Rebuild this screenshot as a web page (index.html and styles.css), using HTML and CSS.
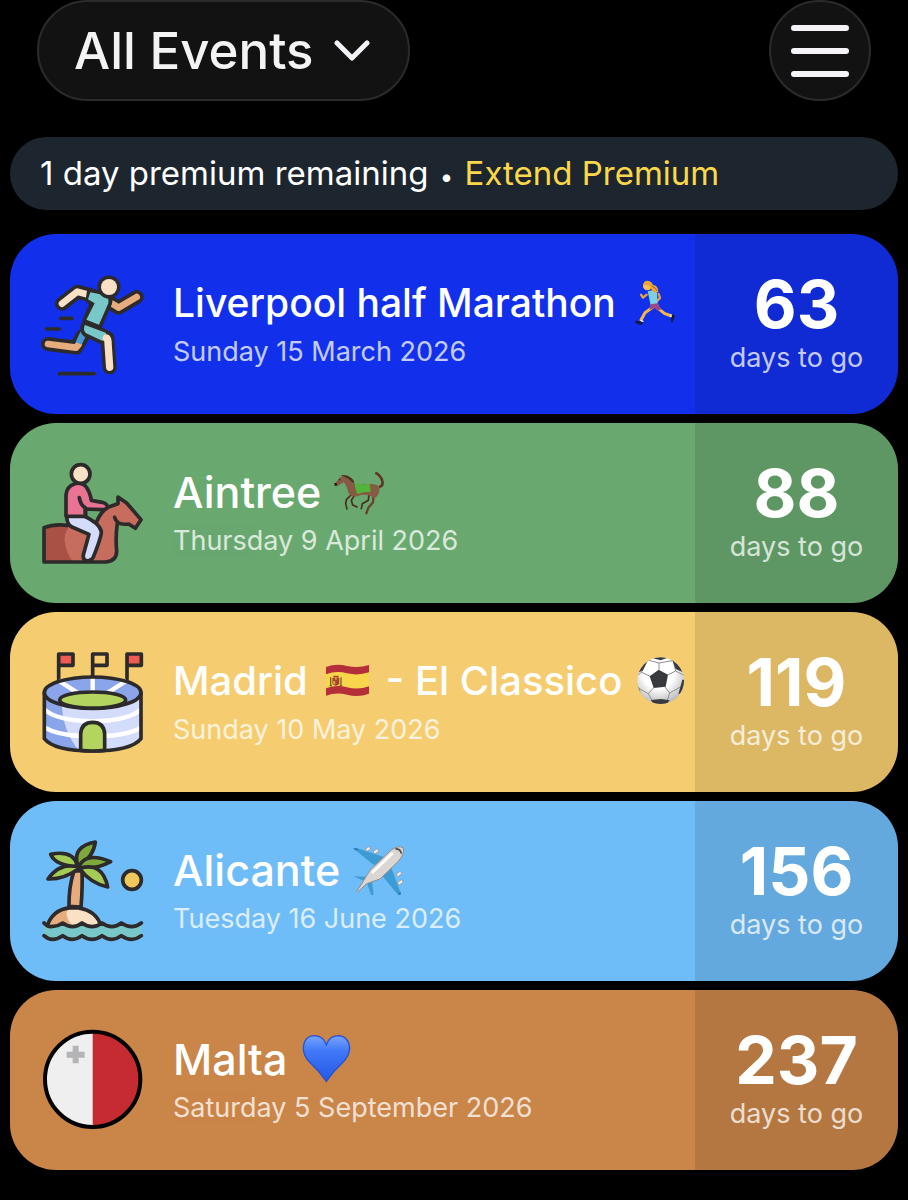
FILE: index.html
```html
<!DOCTYPE html>
<html lang="en">
<head>
    <meta charset="UTF-8">
    <meta name="viewport" content="width=device-width, initial-scale=1.0">
    <title>All Events</title>
    <link rel="stylesheet" href="styles.css">
</head>
<body>
    <header class="topbar">
        <button type="button" class="filter" aria-haspopup="true">
            All Events
            <svg class="chevron" viewBox="0 0 36 24" aria-hidden="true"><path d="M3 4 L18 19 L33 4"/></svg>
        </button>
        <button type="button" class="menu" aria-label="Menu">
            <svg viewBox="0 0 58 54" aria-hidden="true"><path d="M3 4H55M3 27H55M3 50H55"/></svg>
        </button>
    </header>

    <main>
        <p class="banner">1 day premium remaining <span class="dot">•</span> <a href="#">Extend Premium</a></p>

        <ul class="events">
            <li class="event blue">
                <!-- Runner -->
                <svg class="icon" viewBox="30 30 312 312" aria-hidden="true">
                    <g class="line">
                        <path d="M92 169H126M50 201H88M88 335H192"/>
                    </g>
                    <g class="limb-edge">
                        <path d="M320 105L266 137L248 126"/>
                        <path d="M158 222L138 257L54 246"/>
                        <path d="M96 125L142 89L184 100"/>
                        <path d="M176 200L232 228L239 316"/>
                    </g>
                    <g class="limb">
                        <path stroke="#e6ac7d" d="M320 105L266 137L248 126"/>
                        <path stroke="#e6ac7d" d="M146 247L138 257L54 246"/>
                        <path stroke="#4b99cf" stroke-linecap="butt" d="M162 210L146 244"/>
                        <path stroke="#fae0c5" d="M96 125L142 89L176 98"/>
                    </g>
                    <path fill="#2d2a2b" stroke="#2d2a2b" stroke-width="22" stroke-linejoin="round" d="M181 93L218 98Q240 104 235 124L207 188L169 175L190 124L178 114Z"/>
                    <path fill="#79c8c9" d="M181 91L218 98Q240 104 235 124L207 188L169 173L194 124L174 112Z"/>
                    <path class="line" d="M165 182L224 206"/>
                    <path fill="#79c8c9" d="M163 188L229 213L217 238L164 216Q153 206 163 188Z"/>
                    <path stroke="#fae0c5" stroke-width="22" stroke-linecap="round" stroke-linejoin="round" fill="none" d="M229 228Q234 230 234 242L239 316"/>
                    <path class="line" d="M160 186Q150 206 166 219L214 241"/>
                    <circle class="line" cx="237" cy="75" r="29"/>
                    <circle fill="#fae0c5" cx="237" cy="75" r="24"/>
                </svg>
                <div class="details">
                    <h2 class="longest">Liverpool half Marathon
                        <svg class="emoji" viewBox="27 24 162 150" aria-label="runner" role="img">
                            <path fill="none" stroke="#e9a33b" stroke-width="7" stroke-linecap="round" stroke-linejoin="round" d="M83 74L72 83L66 74M119 72L123 84L114 94"/>
                            <path fill="none" stroke="#f2b64c" stroke-width="9" stroke-linecap="round" stroke-linejoin="round" d="M101 112L78 128L66 150M114 112L136 130L157 138"/>
                            <path fill="#7bd0e2" d="M86 64Q100 58 114 68L116 104L95 106Z"/>
                            <path fill="#9b4b83" d="M94 103L117 100L127 118L116 122L106 114L92 120Z"/>
                            <circle fill="#f8c252" cx="85" cy="48" r="13"/>
                            <path fill="#eda634" d="M73 46Q72 32 86 32Q98 33 102 45Q118 46 118 66Q104 72 96 56Q90 42 73 46Z"/>
                            <path fill="none" stroke="#a96b35" stroke-width="3" d="M97 48Q110 51 115 63"/>
                            <path fill="#101c45" d="M48 152L70 154L72 162L64 164L49 159ZM155 136L164 133L168 140L160 158L156 155Z"/>
                            <path fill="none" stroke="#fff" stroke-width="4" d="M65 151L73 155M155 133L157 141"/>
                        </svg>
                    </h2>
                    <p>Sunday 15 March 2026</p>
                </div>
                <div class="countdown"><strong>63</strong><span>days to go</span></div>
            </li>

            <li class="event green">
                <!-- Horse rider -->
                <svg class="icon" viewBox="30 30 312 312" aria-hidden="true">
                    <path fill="#c66d5e" d="M42 230Q78 218 120 222L190 225L220 184Q236 166 262 162L264 138L290 158L333 206L316 232L295 220Q272 224 258 216Q254 240 260 270L260 304Q256 333 228 333H42Z"/>
                    <path fill="#aa5146" d="M42 230Q78 218 118 226Q98 250 106 282Q112 312 130 333H42Z"/>
                    <path class="line" d="M112 223Q72 218 42 230V333H228Q260 330 260 300Q256 260 262 216M198 216Q214 178 236 168L264 158L264 138L290 156L333 206L316 232L296 219Q260 224 254 199"/>
                    <path class="line" fill="#d4dcfb" d="M110 194H160Q210 218 214 242Q214 258 190 318Q182 334 166 328Q158 324 160 312L177 250L126 228Q110 220 110 194Z"/>
                    <path class="line" fill="#e87393" d="M108 196V132Q110 106 134 98Q158 92 170 110Q180 124 184 148L216 154Q232 158 232 168Q228 176 218 176L166 174L167 196Z"/>
                    <path class="line" d="M148 140Q152 164 166 170V194"/>
                    <circle class="line" fill="#fae0c5" cx="152" cy="69" r="28"/>
                </svg>
                <div class="details">
                    <h2>Aintree
                        <svg class="emoji" viewBox="42 24 162 150" aria-label="horse" role="img">
                            <path fill="none" stroke="#5d3524" stroke-width="8" stroke-linejoin="round" d="M180 84Q194 80 190 66Q186 50 169 41"/>
                            <path fill="none" stroke="#4a2a1c" stroke-width="5" stroke-linecap="round" stroke-linejoin="round" d="M96 108L82 122L80 134L84 150M106 110L97 124L101 138L114 144M150 106L148 124L130 134L127 149"/>
                            <path fill="none" stroke="#6b4130" stroke-width="7" stroke-linecap="round" stroke-linejoin="round" d="M164 104L162 130L148 146L142 163"/>
                            <path fill="#865b43" d="M47 74L62 56L72 50L90 62L106 74L144 76Q174 72 182 86Q182 108 166 118Q148 104 126 108Q100 120 88 102Q84 80 74 70L54 82Z"/>
                            <path fill="#51301f" d="M64 50Q82 44 96 56Q106 62 106 74Q96 68 88 60L72 52Z"/>
                            <path fill="#53b43c" d="M107 73Q132 78 152 75L155 98Q132 98 115 105Q108 90 107 73Z"/>
                            <circle fill="#20130c" cx="62" cy="62" r="2"/>
                            <path fill="#20130c" d="M46 72L53 72L54 80L47 80Z"/>
                        </svg>
                    </h2>
                    <p>Thursday 9 April 2026</p>
                </div>
                <div class="countdown"><strong>88</strong><span>days to go</span></div>
            </li>

            <li class="event yellow">
                <!-- Stadium -->
                <svg class="icon" viewBox="30 30 312 312" aria-hidden="true">
                    <path class="line" fill="#ee5b52" d="M86 118V42H129V76H86"/>
                    <path class="line" d="M188 112V42H231V76H188"/>
                    <path class="line" fill="#ee5b52" d="M291 118V42H334V76H291"/>
                    <path fill="#d4dcfb" d="M43 158V296Q72 333 188 333Q304 333 333 296V158Z"/>
                    <path fill="#8aa5ea" d="M43 158V296Q72 326 146 331Q100 274 96 200Z"/>
                    <path fill="none" stroke="#fff" stroke-width="13" d="M43 208Q80 242 188 244Q296 242 333 208M43 262Q80 284 152 288M224 288Q300 284 333 262"/>
                    <ellipse fill="#8aa5ea" cx="188" cy="158" rx="145" ry="47"/>
                    <path fill="none" stroke="#fff" stroke-width="13" d="M86 122L142 158M188 110V156M290 122L234 158"/>
                    <ellipse class="line" cx="188" cy="158" rx="145" ry="47"/>
                    <ellipse class="line" fill="#b3d45e" cx="188" cy="180" rx="99" ry="24"/>
                    <path class="line" d="M43 158V296Q72 333 188 333Q304 333 333 296V158"/>
                    <path class="line" fill="#b3d45e" d="M152 331V282Q154 247 188 247Q222 247 224 282V331Q188 335 152 331Z"/>
                </svg>
                <div class="details">
                    <h2 class="long">Madrid
                        <svg class="emoji" viewBox="27 21 162 150" aria-label="flag of Spain" role="img">
                            <path fill="#b52f3a" d="M45 54Q76 42 108 51Q142 59 174 48V134Q142 146 108 137Q76 128 45 140Z"/>
                            <path fill="#f7d64b" d="M45 76Q76 64 108 73Q142 81 174 70V112Q142 124 108 115Q76 106 45 118Z"/>
                            <path fill="#a8452f" d="M64 87H85V105Q75 115 64 105ZM67 80H83V86H67Z"/>
                            <path fill="#d9a12e" d="M72 84H77V92H72ZM66 97H73V106H66Z"/>
                            <path fill="none" stroke="#7b5a36" stroke-width="4" d="M59 85V111M90 85V111M56 110H63M86 110H93"/>
                        </svg>
                        - El Classico
                        <svg class="emoji" viewBox="975 21 162 150" aria-label="football" role="img">
                            <defs>
                                <radialGradient id="ball" cx="45%" cy="35%" r="65%">
                                    <stop offset="0.5" stop-color="#fff"/>
                                    <stop offset="1" stop-color="#b9babd"/>
                                </radialGradient>
                                <clipPath id="ball-clip"><circle cx="1055" cy="95" r="70"/></clipPath>
                            </defs>
                            <circle fill="url(#ball)" cx="1055" cy="95" r="70"/>
                            <g clip-path="url(#ball-clip)">
                                <path fill="none" stroke="#8f9094" stroke-width="3" d="M1050 62V42L1012 32M1050 42L1096 34M1024 82L998 70L984 80M998 70L1010 36M1034 116L1018 134L986 116M1018 134L1030 156M1068 114L1082 132L1118 112M1082 132L1074 156M1076 78L1100 66L1126 80M1100 66L1092 34"/>
                                <path fill="#393a3d" d="M1049 62L1077 77L1070 113L1034 117L1022 82ZM1032 28L1055 34L1076 26L1070 18H1040ZM994 42L1016 36L1002 64L986 72ZM1090 32L1112 46L1122 70L1100 60ZM980 98L992 122L998 142L980 130ZM1120 92L1130 92V126L1108 136ZM1026 153L1056 150L1082 154L1070 170H1036Z"/>
                            </g>
                        </svg>
                    </h2>
                    <p>Sunday 10 May 2026</p>
                </div>
                <div class="countdown"><strong>119</strong><span>days to go</span></div>
            </li>

            <li class="event sky">
                <!-- Palm island -->
                <svg class="icon" viewBox="30 30 312 312" aria-hidden="true">
                    <path fill="#79c8c9" d="M42 284Q54 296 70 292Q84 292 98 284Q128 300 156 284Q186 300 216 284Q246 300 274 284Q306 302 334 282V320Q306 342 274 322Q246 342 216 322Q186 342 156 322Q128 342 98 322Q66 342 42 320Z"/>
                    <path fill="#fae0c5" d="M54 286Q74 236 132 236Q190 238 210 284Q184 298 156 284Q128 298 98 284Q76 298 54 286Z"/>
                    <path fill="#e6ac7d" d="M54 286Q70 238 124 238Q94 246 126 291Q110 292 98 284Q76 298 54 286Z"/>
                    <path class="line" d="M54 284Q74 236 132 236Q190 238 210 282"/>
                    <path class="line" d="M42 282Q54 296 70 292Q84 292 98 282Q128 304 156 282Q186 304 216 282Q246 304 274 282Q306 304 334 282M42 320Q66 342 98 320Q128 342 156 320Q186 342 216 320Q246 342 274 320Q306 342 334 320"/>
                    <path class="line" fill="#e6ac7d" d="M132 126Q116 174 117 232L153 234Q158 176 156 126Z"/>
                    <path class="line" fill="#a3cb55" d="M145 112Q88 100 54 150Q100 152 145 120Z"/>
                    <path class="line" fill="#a3cb55" d="M142 108Q128 62 62 76Q76 110 142 112Z"/>
                    <path class="line" fill="#7fa83c" d="M142 104Q128 52 196 39Q190 84 148 110Z"/>
                    <path class="line" fill="#7fa83c" d="M148 110Q170 68 242 98Q198 122 150 116Z"/>
                    <path class="line" fill="#a3cb55" d="M150 118Q218 98 233 174Q180 162 150 120Z"/>
                    <circle class="line" fill="#f0c75a" cx="306" cy="153" r="28"/>
                </svg>
                <div class="details">
                    <h2>Alicante
                        <svg class="emoji" viewBox="42 30 162 150" aria-label="airplane" role="img">
                            <path fill="#3d9bd3" d="M46 40L58 40L138 66L120 92L104 88ZM134 124L160 98L189 176L182 182ZM46 124L96 126L84 140ZM86 142L102 138L107 180L100 182Z"/>
                            <path fill="#2b7eb4" d="M46 40L58 40L60 46L50 46ZM182 172L188 170L189 178L182 182Z"/>
                            <g fill="#f1eeec" stroke="#948b88" stroke-width="2">
                                <ellipse cx="90" cy="42" rx="8" ry="5" transform="rotate(-35 90 42)"/>
                                <ellipse cx="114" cy="49" rx="9" ry="5" transform="rotate(-35 114 49)"/>
                                <ellipse cx="183" cy="117" rx="9" ry="5" transform="rotate(-40 183 117)"/>
                                <ellipse cx="187" cy="142" rx="9" ry="5" transform="rotate(-40 187 142)"/>
                            </g>
                            <path fill="#dcd6d3" stroke="#948b88" stroke-width="3" d="M56 170L96 106L158 46Q180 30 195 38Q202 52 182 78L126 132L86 146L58 172Z"/>
                            <path fill="none" stroke="#fff" stroke-width="8" stroke-linecap="round" d="M104 112L162 56"/>
                            <path fill="none" stroke="#4c5157" stroke-width="5" d="M172 41Q188 42 190 56"/>
                        </svg>
                    </h2>
                    <p>Tuesday 16 June 2026</p>
                </div>
                <div class="countdown"><strong>156</strong><span>days to go</span></div>
            </li>

            <li class="event orange">
                <!-- Flag of Malta -->
                <svg class="icon" viewBox="30 30 312 312" aria-hidden="true">
                    <circle fill="#efeff0" cx="188" cy="184" r="142"/>
                    <path fill="#c62b31" d="M188 42A142 142 0 0 1 188 326Z"/>
                    <path fill="#b4b4b6" d="M128 83H146V101H164V119H146V136H128V119H110V101H128Z"/>
                    <circle fill="none" stroke="#000" stroke-width="12" cx="188" cy="184" r="143"/>
                </svg>
                <div class="details">
                    <h2>Malta
                        <svg class="emoji" viewBox="417 48 162 150" aria-label="blue heart" role="img">
                            <defs>
                                <linearGradient id="heart" x1="0" y1="0" x2="0" y2="1">
                                    <stop offset="0" stop-color="#76a4ff"/>
                                    <stop offset="0.35" stop-color="#3f77f7"/>
                                    <stop offset="1" stop-color="#2459e6"/>
                                </linearGradient>
                            </defs>
                            <path fill="url(#heart)" stroke="#2553d4" stroke-width="4" d="M499 190Q478 160 452 136Q430 116 430 90Q432 54 464 53Q490 54 499 80Q508 54 534 53Q566 54 569 90Q568 116 546 136Q520 160 499 190Z"/>
                        </svg>
                    </h2>
                    <p>Saturday 5 September 2026</p>
                </div>
                <div class="countdown"><strong>237</strong><span>days to go</span></div>
            </li>
        </ul>
    </main>
</body>
</html>
```

FILE: styles.css
```css
* {
    box-sizing: border-box;
}
body {
    margin: 0;
    padding: 0 10px 28px;
    background: #000;
    color: #fff;
    font-family: Inter, "Liberation Sans", sans-serif;
}
.topbar {
    display: flex;
    justify-content: space-between;
    padding: 0 27px;
}
.filter, .menu {
    display: flex;
    align-items: center;
    height: 101px;
    background: #121212;
    border: 2px solid #2b2b2b;
    border-radius: 52px;
    color: #f3f3f3;
    cursor: pointer;
}
.filter {
    gap: 20px;
    padding: 0 38px 0 35px;
    font-family: inherit;
    font-size: 51px;
    font-weight: 500;
}
.chevron {
    width: 36px;
    height: 24px;
}
.chevron path, .menu path {
    fill: none;
    stroke: #f5f3f7;
    stroke-width: 5;
    stroke-linecap: round;
    stroke-linejoin: round;
}
.menu {
    justify-content: center;
    width: 102px;
    padding: 0;
}
.menu svg {
    width: 58px;
    height: 54px;
}
.menu path {
    stroke-width: 6;
}
.banner {
    margin: 36px 0 24px;
    padding: 0 30px;
    background: #1d262f;
    border-radius: 37px;
    font-size: 33px;
    line-height: 73px;
}
.banner .dot {
    margin: 0 2px;
    font-size: 24px;
    line-height: 24px;
}
.banner a {
    color: #fbd84b;
    text-decoration: none;
}
.events {
    display: flex;
    flex-direction: column;
    gap: 9px;
    margin: 0;
    padding: 0;
    list-style: none;
}
.event {
    display: flex;
    align-items: center;
    height: 180px;
    padding-left: 30px;
    border-radius: 46px;
    overflow: hidden;
}
.blue {
    background: #1230ec;
}
.green {
    background: #69a970;
}
.yellow {
    background: #f5cd70;
}
.sky {
    background: #6fbdf8;
}
.orange {
    background: #ca8549;
}
.icon {
    flex: none;
    width: 104px;
    height: 104px;
}
.line {
    fill: none;
    stroke: #2d2a2b;
    stroke-width: 11;
    stroke-linecap: round;
    stroke-linejoin: round;
}
.line[fill] {
    fill: revert-layer;
}
.limb-edge {
    fill: none;
    stroke: #2d2a2b;
    stroke-width: 42;
    stroke-linecap: round;
    stroke-linejoin: round;
}
.limb {
    fill: none;
    stroke-width: 20;
    stroke-linecap: round;
    stroke-linejoin: round;
}
.details {
    flex: 1;
    min-width: 0;
    padding-left: 29px;
    white-space: nowrap;
}
.details h2 {
    display: flex;
    align-items: center;
    gap: 12px;
    margin: 0;
    font-size: 43px;
    font-weight: 500;
    line-height: 56px;
}
/* long titles shrink to stay clear of the countdown */
.details h2.long {
    font-size: 40px;
}
.details h2.longest {
    font-size: 39px;
}
.details p {
    margin: 0;
    font-size: 27px;
    line-height: 42px;
    opacity: 0.75;
}
.emoji {
    flex: none;
    width: 54px;
    height: 50px;
}
.countdown {
    display: flex;
    flex: none;
    flex-direction: column;
    align-items: center;
    justify-content: center;
    align-self: stretch;
    width: 203px;
    background: rgba(0, 0, 0, 0.1);
}
.countdown strong {
    font-size: 66px;
    font-weight: 700;
    line-height: 68px;
}
.countdown span {
    font-size: 27px;
    line-height: 40px;
    opacity: 0.75;
}
```
